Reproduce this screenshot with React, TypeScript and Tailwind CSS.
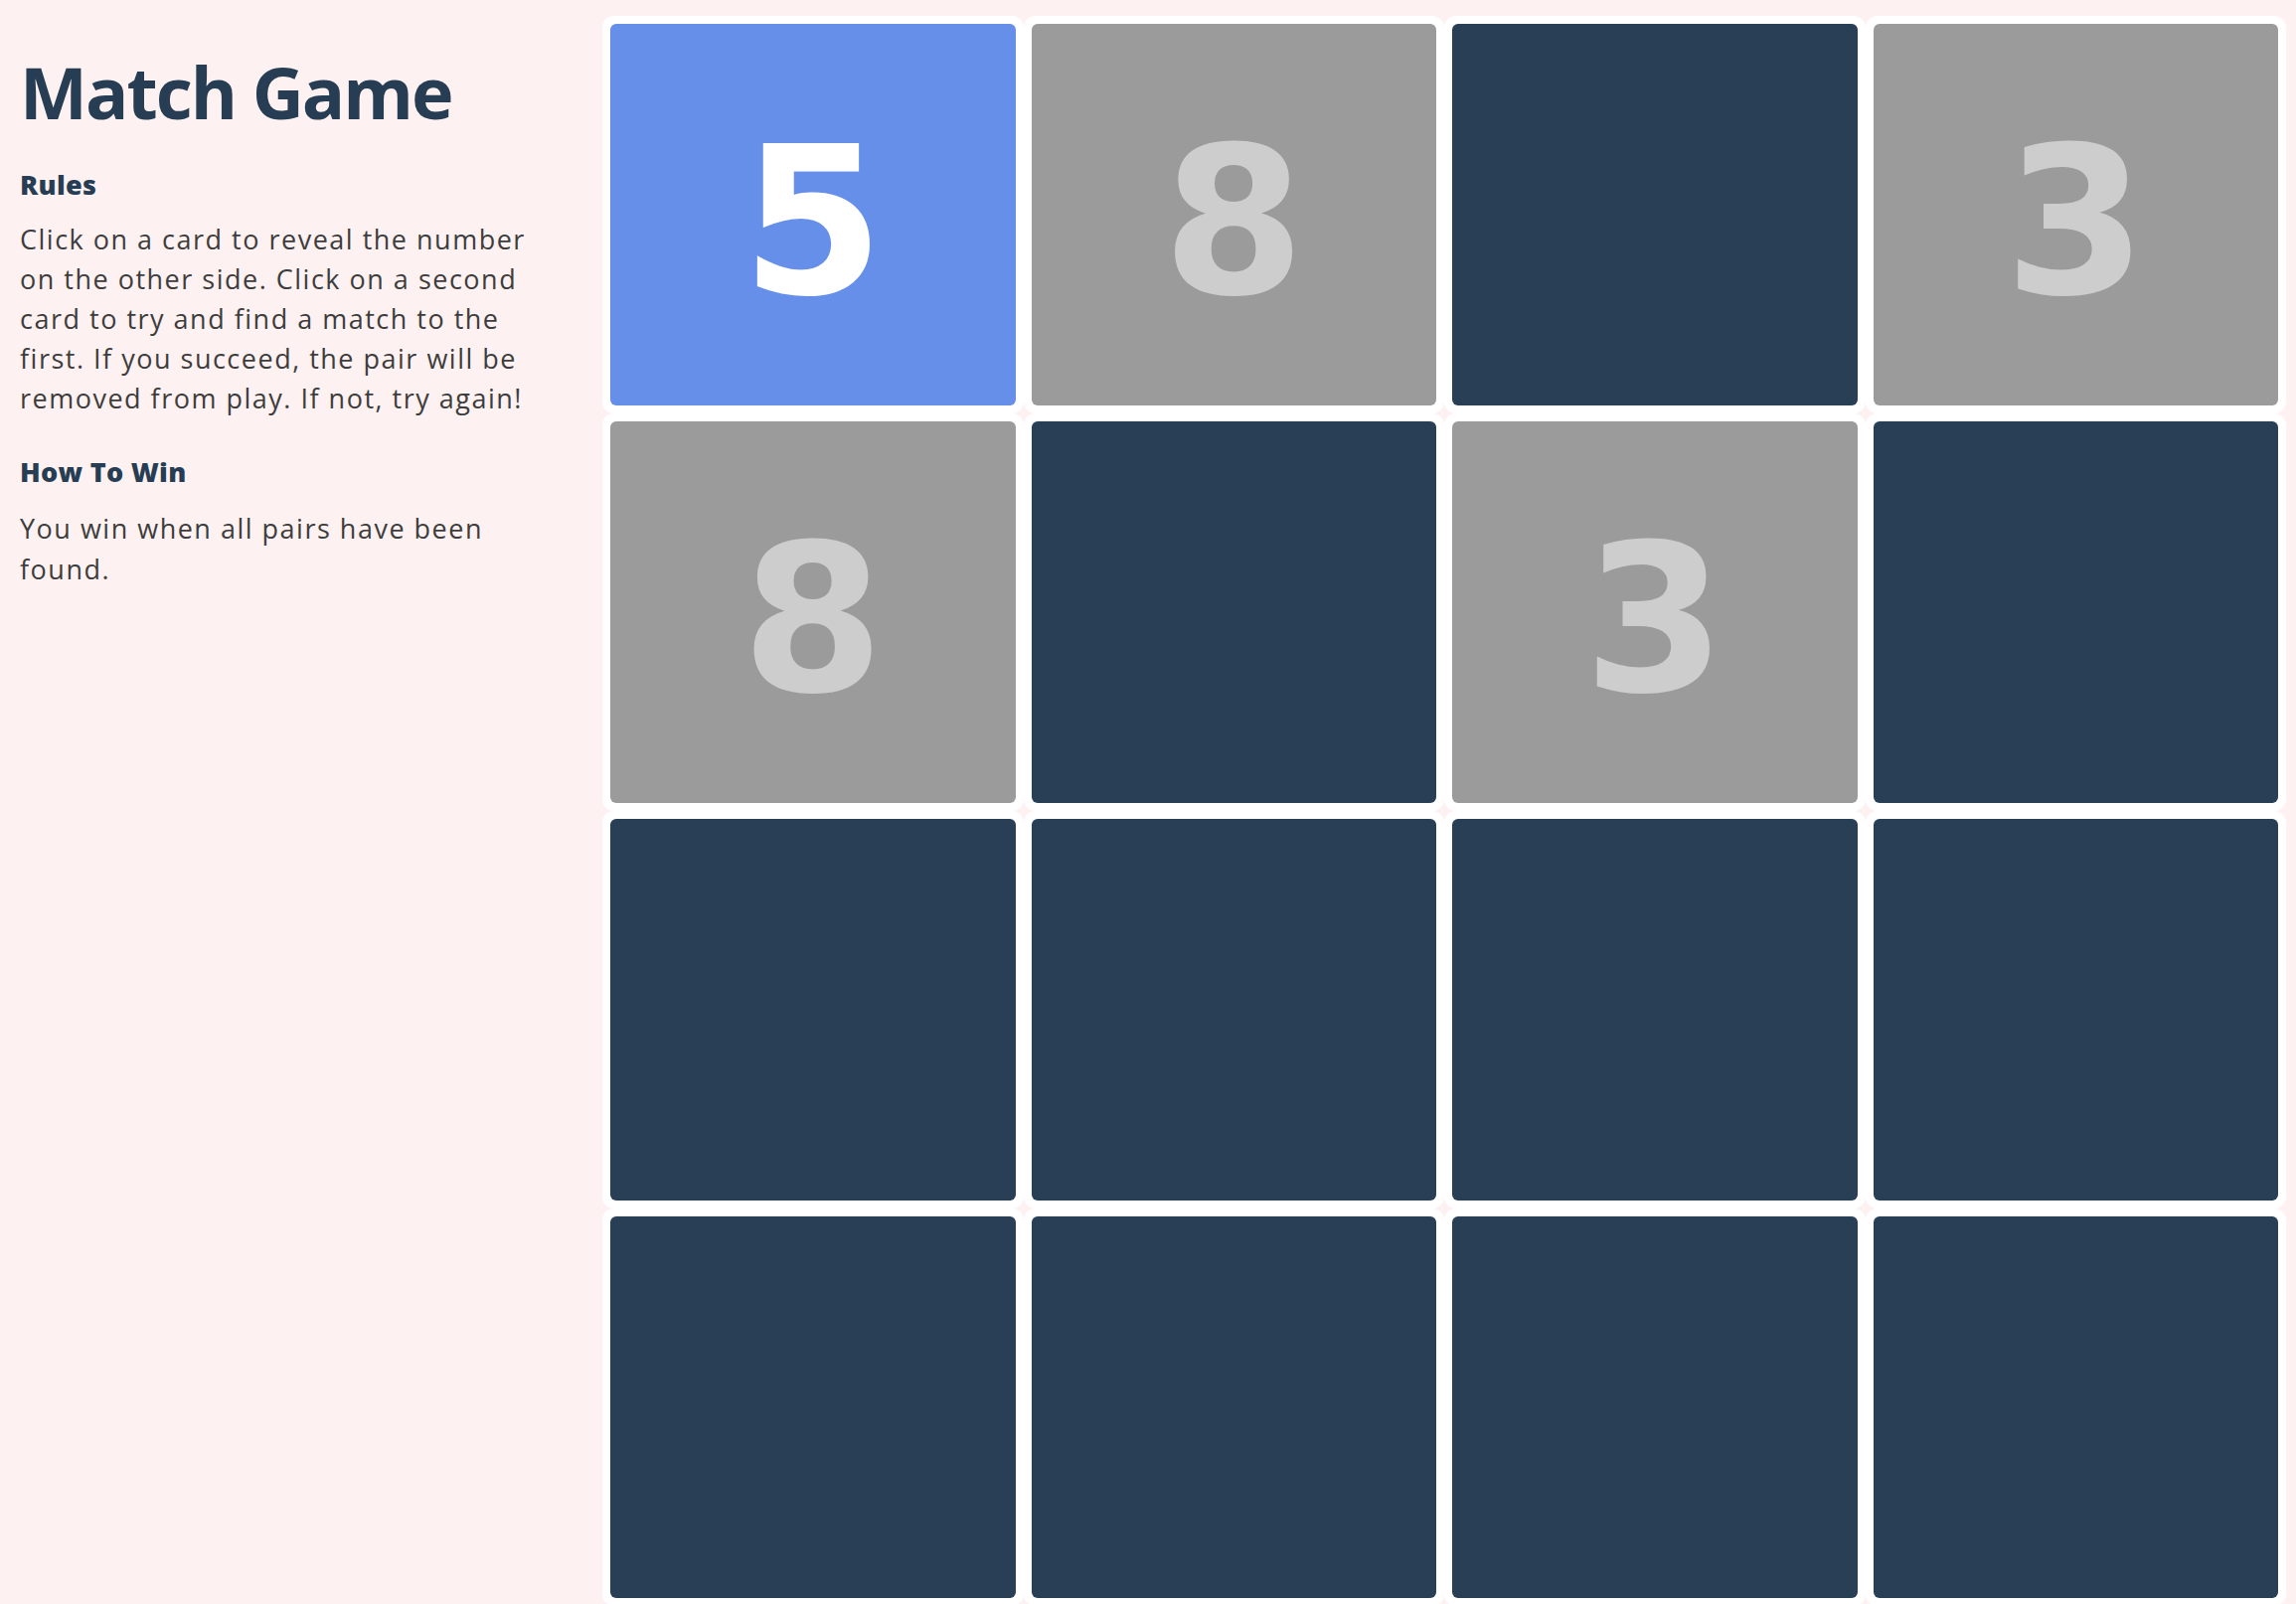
import React from 'react';

type Card = { value: number; state: 'hidden' | 'active' | 'shown' };

const cards: Card[] = [
  { value: 5, state: 'active' },
  { value: 8, state: 'shown' },
  { value: 1, state: 'hidden' },
  { value: 3, state: 'shown' },
  { value: 8, state: 'shown' },
  { value: 2, state: 'hidden' },
  { value: 3, state: 'shown' },
  { value: 4, state: 'hidden' },
  { value: 6, state: 'hidden' },
  { value: 7, state: 'hidden' },
  { value: 1, state: 'hidden' },
  { value: 2, state: 'hidden' },
  { value: 4, state: 'hidden' },
  { value: 6, state: 'hidden' },
  { value: 7, state: 'hidden' },
  { value: 5, state: 'hidden' },
];

const GameCard = ({ card }: { card: Card }) => {
  const face =
    card.state === 'active'
      ? 'bg-[#658fe9] text-white'
      : card.state === 'shown'
      ? 'bg-[#9b9b9b] text-[#cdcdcd]'
      : 'bg-[#283f55] text-transparent';

  return (
    <div className="h-[400px] rounded-[12px] bg-white p-2">
      <div
        className={`flex h-full items-center justify-center rounded-[6px] font-['DejaVu_Sans',sans-serif] text-[206px] font-bold leading-none ${face}`}
      >
        {card.state !== 'hidden' && <span className="pt-4">{card.value}</span>}
      </div>
    </div>
  );
};

export default function App() {
  return (
    <div className="grid min-h-screen grid-cols-[606px_1fr] bg-[#fdf2f1] pr-[10px] font-['Open_Sans',sans-serif]">
      <aside className="pl-5 pt-[49px]">
        <h1 className="text-[72px] font-bold leading-[1.2] tracking-[-2px] text-[#263d53]">Match Game</h1>
        <h2 className="mt-[31px] text-[27px] font-extrabold leading-[40px] tracking-[0.3px] text-[#263d53]">Rules</h2>
        <p className="mt-[15px] w-[540px] text-[27px] leading-[40px] tracking-[1.5px] text-[#3d3d3d]">
          Click on a card to reveal the number on the other side. Click on a second card to try and find a match to
          the first. If you succeed, the pair will be removed from play. If not, try again!
        </p>
        <h2 className="mt-[34px] text-[27px] font-extrabold leading-[40px] tracking-[0.3px] text-[#263d53]">
          How To Win
        </h2>
        <p className="mt-[16px] w-[540px] text-[27px] leading-[41px] tracking-[1.5px] text-[#3d3d3d]">
          You win when all pairs have been found.
        </p>
      </aside>

      <main className="grid grid-cols-4 pt-4">
        {cards.map((card, i) => (
          <GameCard key={i} card={card} />
        ))}
      </main>
    </div>
  );
}
